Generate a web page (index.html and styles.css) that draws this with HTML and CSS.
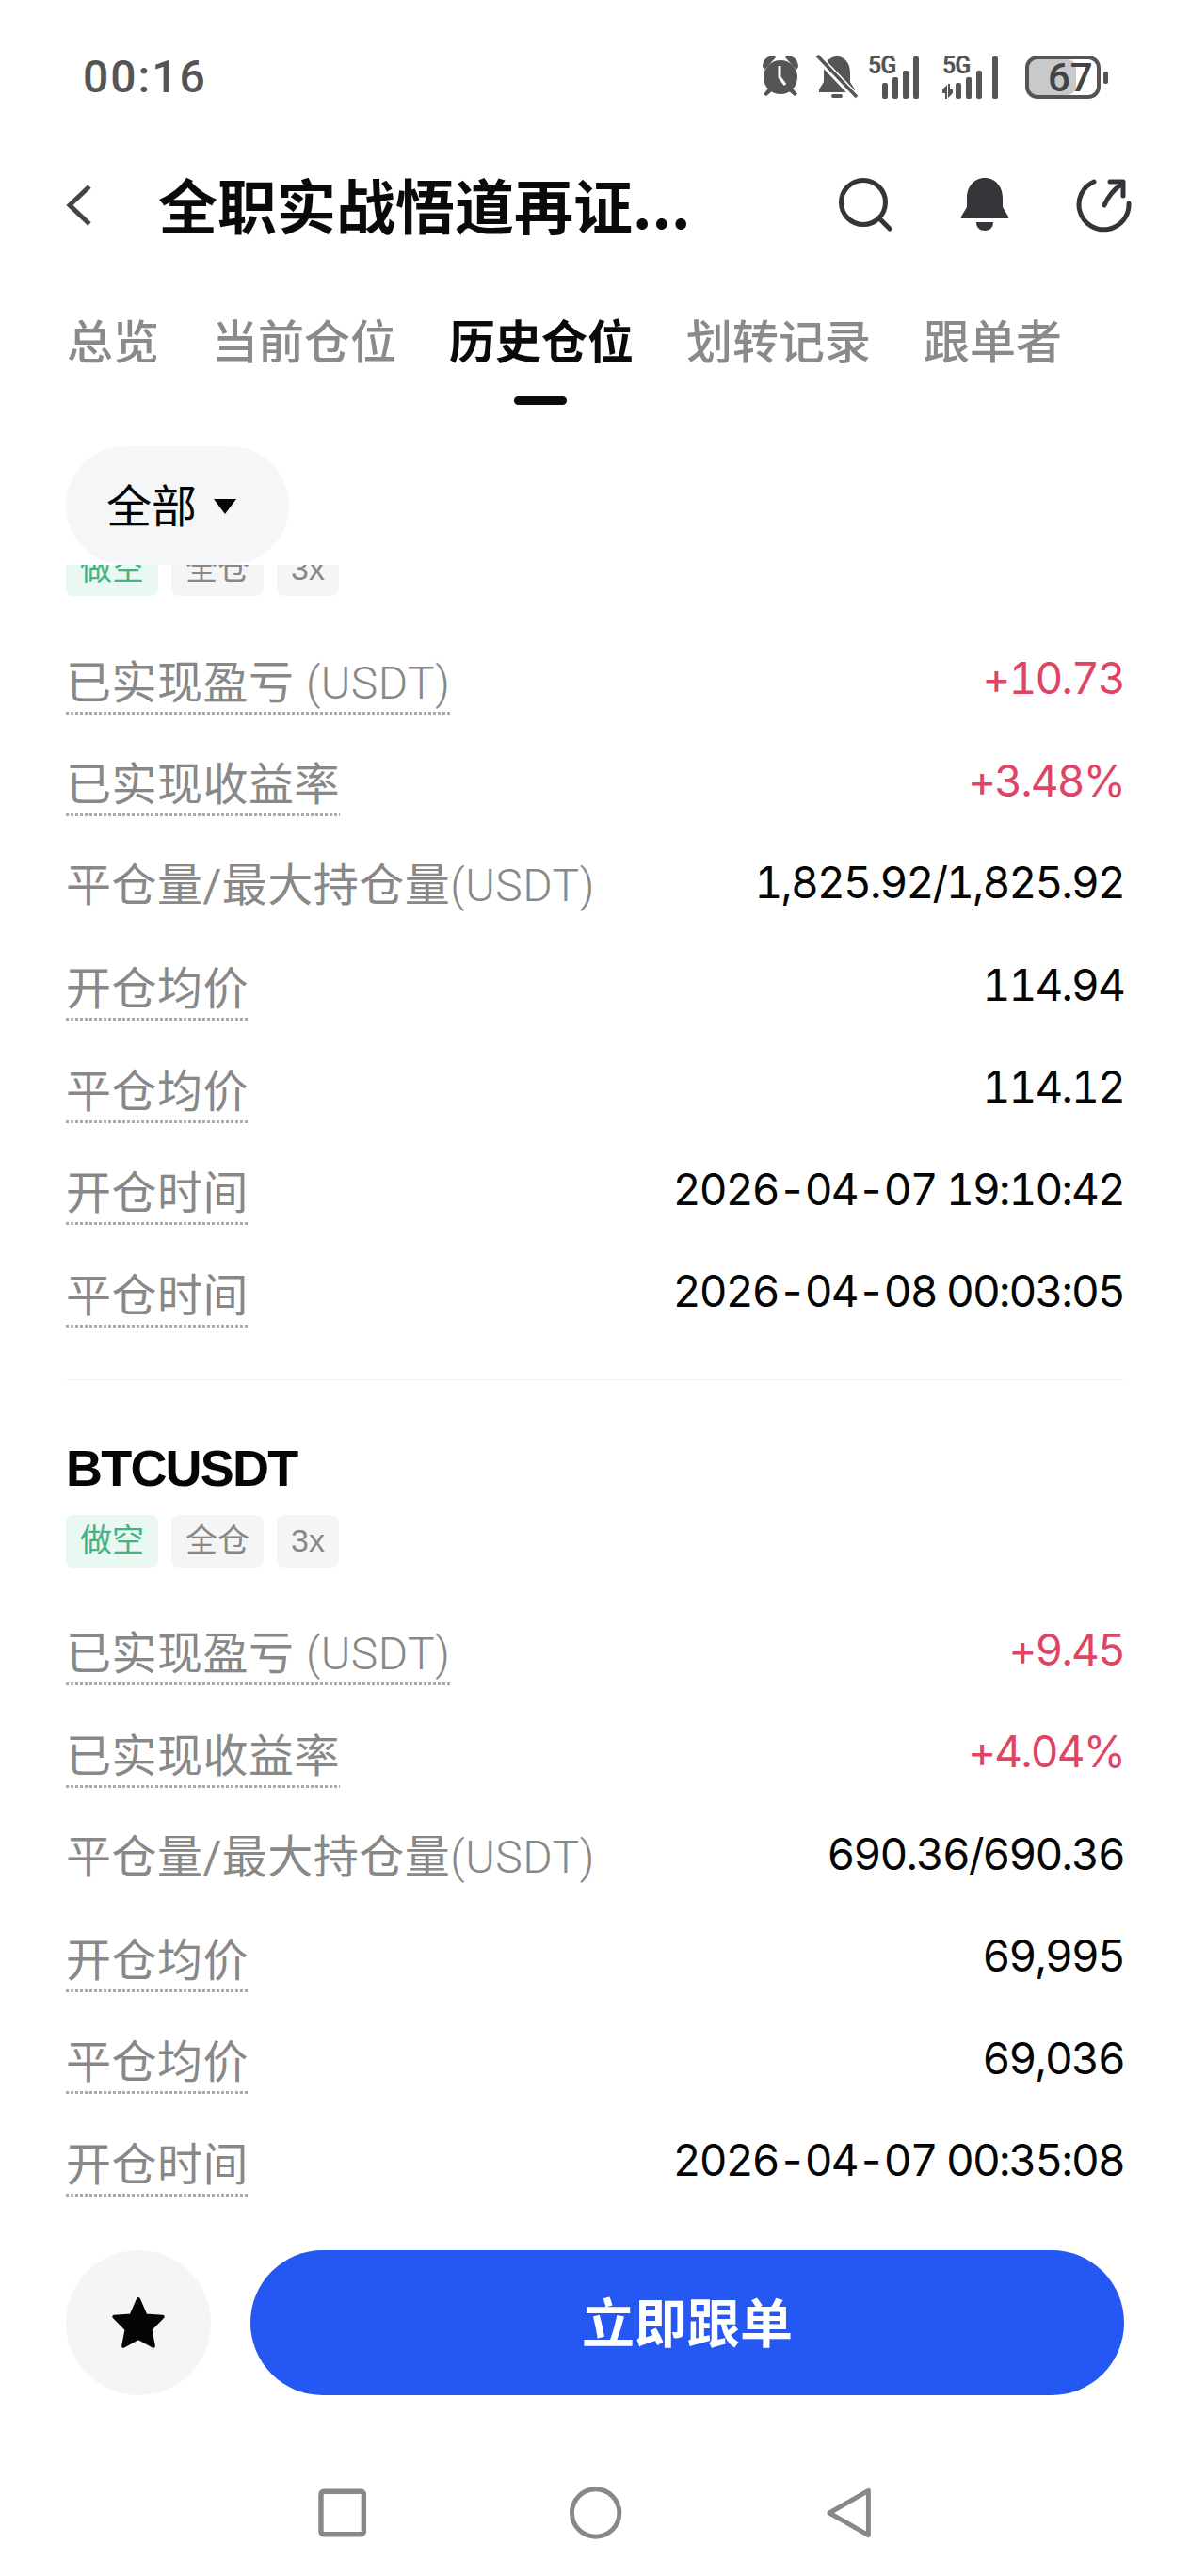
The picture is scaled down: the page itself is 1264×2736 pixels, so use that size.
FILE: index.html
```html
<!DOCTYPE html>
<html lang="zh-CN">
<head>
<meta charset="utf-8">
<title>历史仓位</title>
<link rel="stylesheet" href="styles.css">
</head>
<body>
<div class="page">
  <div class="status">
    <span class="time">00:16</span>
    <svg class="status-icons" width="384" height="50" viewBox="0 0 384 50">
      <g fill="#555">
        <circle cx="21" cy="26" r="18"/>
        <path d="M2 15C2 7 8 3 14 3L16 5 4 18Z M40 15C40 7 34 3 28 3L26 5 38 18Z"/>
        <path d="M8 38l-5 6 3 2 6-5Z M34 38l5 6-3 2-6-5Z"/>
      </g>
      <path d="M20 14v12l6 8" fill="none" stroke="#fff" stroke-width="3"/>
      <g fill="#555">
        <path d="M81 4c9 0 14 8 14 17v10l5 8v3H62v-3l5-8V21c0-9 5-17 14-17Z"/>
        <rect x="75" y="44" width="12" height="4" rx="2"/>
      </g>
      <path d="M60 4 102 48" stroke="#fff" stroke-width="8"/>
      <path d="M60 3 102 47" stroke="#555" stroke-width="3.5"/>
      <text x="114" y="22" class="net">5G</text>
      <g fill="#555">
        <rect x="129" y="32" width="6" height="17" rx="2"/>
        <rect x="140" y="26" width="6" height="23" rx="2"/>
        <rect x="151" y="19" width="6" height="30" rx="2"/>
        <rect x="162" y="4" width="6" height="45" rx="2"/>
      </g>
      <text x="193" y="22" class="net">5G</text>
      <g fill="#555">
        <path d="M193 39l5-5v15h-2v-6h-3Z M204 43l-5 5V33h2v6h3Z"/>
        <rect x="207" y="32" width="6" height="17" rx="2"/>
        <rect x="218" y="26" width="6" height="23" rx="2"/>
        <rect x="229" y="19" width="6" height="30" rx="2"/>
        <rect x="246" y="4" width="6" height="45" rx="2"/>
      </g>
      <rect x="285" y="7" width="50" height="38" rx="9" fill="#c9c9c9"/>
      <rect x="283" y="5" width="76" height="42" rx="11" fill="none" stroke="#555" stroke-width="4"/>
      <rect x="364" y="20" width="5" height="13" rx="2" fill="#555"/>
      <text x="305" y="41" class="batt">67</text>
    </svg>
  </div>

  <header class="nav">
    <svg class="back" width="28" height="46" viewBox="0 0 28 46"><path d="M25 3 4 23l21 20" fill="none" stroke="#444" stroke-width="5"/></svg>
    <h1 class="title">全职实战悟道再证...</h1>
    <div class="actions">
      <svg width="60" height="60" viewBox="0 0 60 60"><circle cx="28" cy="27" r="23.5" fill="none" stroke="#333538" stroke-width="5"/><path d="M45 44l11 11" stroke="#333538" stroke-width="5" stroke-linecap="round" fill="none"/></svg>
      <svg width="54" height="60" viewBox="0 0 54 60"><path d="M27 1C39 1 46 11 46 22V32L52 42Q53 44 51 44H3Q1 44 2 42L8 32V22C8 11 15 1 27 1Z" fill="#333538"/><path d="M18 48H36C36 54 32 57 27 57S18 54 18 48Z" fill="#333538"/></svg>
      <svg width="62" height="60" viewBox="0 0 62 60"><path d="M19 5A26.5 26.5 0 1 0 56 28" fill="none" stroke="#333538" stroke-width="5" stroke-linecap="round"/><path d="M30 30Q36 16 48 8" fill="none" stroke="#333538" stroke-width="5" stroke-linecap="round"/><path d="M36 5H50V20" fill="none" stroke="#333538" stroke-width="5" stroke-linecap="round" stroke-linejoin="round"/></svg>
    </div>
  </header>

  <nav class="tabs">
    <span class="tab">总览</span>
    <span class="tab">当前仓位</span>
    <span class="tab active">历史仓位</span>
    <span class="tab">划转记录</span>
    <span class="tab">跟单者</span>
  </nav>

  <div class="filter">
    <div class="pill"><span>全部</span><i class="caret"></i></div>
  </div>

  <main class="list">
    <section class="card first">
      <div class="tags">
        <span class="tag short">做空</span><span class="tag">全仓</span><span class="tag">3x</span>
      </div>
      <div class="row"><span class="label dotted">已实现盈亏 <span class="unit">(USDT)</span></span><span class="value up">+10.73</span></div>
      <div class="row"><span class="label dotted">已实现收益率</span><span class="value up">+3.48%</span></div>
      <div class="row"><span class="label">平仓量/最大持仓量<span class="unit">(USDT)</span></span><span class="value">1,825.92/1,825.92</span></div>
      <div class="row"><span class="label dotted">开仓均价</span><span class="value">114.94</span></div>
      <div class="row"><span class="label dotted">平仓均价</span><span class="value">114.12</span></div>
      <div class="row"><span class="label dotted">开仓时间</span><span class="value">2026-04-07 19:10:42</span></div>
      <div class="row"><span class="label dotted">平仓时间</span><span class="value">2026-04-08 00:03:05</span></div>
    </section>
    <hr class="divider">
    <section class="card">
      <h2 class="symbol">BTCUSDT</h2>
      <div class="tags">
        <span class="tag short">做空</span><span class="tag">全仓</span><span class="tag">3x</span>
      </div>
      <div class="row"><span class="label dotted">已实现盈亏 <span class="unit">(USDT)</span></span><span class="value up">+9.45</span></div>
      <div class="row"><span class="label dotted">已实现收益率</span><span class="value up">+4.04%</span></div>
      <div class="row"><span class="label">平仓量/最大持仓量<span class="unit">(USDT)</span></span><span class="value">690.36/690.36</span></div>
      <div class="row"><span class="label dotted">开仓均价</span><span class="value">69,995</span></div>
      <div class="row"><span class="label dotted">平仓均价</span><span class="value">69,036</span></div>
      <div class="row"><span class="label dotted">开仓时间</span><span class="value">2026-04-07 00:35:08</span></div>
    </section>
  </main>

  <div class="bar">
    <div class="fav">
      <svg width="60" height="58" viewBox="0 0 60 58"><path d="M30 4 37.6 21.5 55.7 22.7 42.4 36 45.9 53.8 30 45 14.1 53.8 17.6 36 4.3 22.7 22.4 21.5Z" fill="#050505" stroke="#050505" stroke-width="4" stroke-linejoin="round"/></svg>
    </div>
    <button class="cta">立即跟单</button>
  </div>

  <div class="sysnav">
    <svg width="52" height="52" viewBox="0 0 52 52"><rect x="3" y="3" width="46" height="46" rx="3" fill="none" stroke="#888" stroke-width="5.5"/></svg>
    <svg width="56" height="56" viewBox="0 0 56 56"><circle cx="28" cy="28" r="25.5" fill="none" stroke="#888" stroke-width="5"/></svg>
    <svg width="50" height="56" viewBox="0 0 50 56"><path d="M46 4v48L4 28Z" fill="none" stroke="#888" stroke-width="5" stroke-linejoin="round"/></svg>
  </div>
</div>
</body>
</html>
```

FILE: styles.css
```css
* { box-sizing: border-box; }
html, body { margin: 0; padding: 0; background: #fff; }
body { font-family: "Liberation Sans", "Noto Sans CJK SC", sans-serif; color: #050505; }
.page { width: 1264px; height: 2736px; display: flex; flex-direction: column; overflow: hidden; background: #fff; }

.status { height: 160px; flex: none; display: flex; align-items: center; justify-content: space-between; padding: 2px 72px 0 88px; }
.time { font-family: Roboto, sans-serif; font-size: 48px; font-weight: 500; letter-spacing: 2px; color: #555; }
.status-icons { flex: none; }
.net { font-family: "Roboto", sans-serif; font-size: 25px; font-weight: 700; fill: #555; letter-spacing: -1px; }
.batt { font-family: "Roboto", sans-serif; font-size: 42px; font-weight: 500; fill: #444; }

.nav { height: 116px; flex: none; display: flex; align-items: center; padding: 0 59px 0 70px; }
.back { flex: none; }
.title { margin: -6px 0 0 70px; font-family: "Noto Sans CJK SC", sans-serif; font-size: 63px; font-weight: 700; line-height: 1; color: #0a0a0a; white-space: nowrap; }
.actions { margin-left: auto; display: flex; align-items: center; gap: 70px; }

.tabs { height: 164px; flex: none; display: flex; gap: 56px; padding: 0 0 0 71px; }
.tab { position: relative; font-family: "Noto Sans CJK SC", sans-serif; font-size: 49px; font-weight: 500; line-height: 168px; color: #8a8a8a; white-space: nowrap; }
.tab.active { color: #0a0a0a; font-weight: 700; }
.tab.active::after { content: ""; position: absolute; left: 69px; bottom: 10px; width: 56px; height: 9px; border-radius: 5px; background: #0a0a0a; }

.filter { height: 160px; flex: none; padding: 34px 0 0 70px; background: #fff; position: relative; z-index: 1; }
.pill { width: 237px; height: 126px; border-radius: 63px; background: #f4f6f7; display: flex; align-items: center; gap: 18px; padding-left: 43px; }
.pill span { font-family: "Noto Sans CJK SC", sans-serif; font-size: 48px; color: #050505; margin-top: -6px; }
.caret { width: 0; height: 0; border-left: 12px solid transparent; border-right: 12px solid transparent; border-top: 16px solid #050505; margin-top: 2px; }

.list { flex: 1; min-height: 0; overflow: hidden; padding: 0 70px; }
.card.first { margin-top: -23px; }
.tags { display: flex; gap: 14px; margin-bottom: 37px; }
.tag { height: 56px; min-width: 66px; padding: 0 15px; border-radius: 8px; background: #f5f5f5; color: #888; font-size: 34px; line-height: 54px; font-family: "Liberation Sans", "Noto Sans CJK SC", sans-serif; text-align: center; }
.tag.short { background: #e9f8f1; color: #43b387; }

.row { height: 108.5px; display: flex; align-items: center; justify-content: space-between; }
.label { font-family: Roboto, "Noto Sans CJK SC", sans-serif; font-size: 48px; font-weight: 400; letter-spacing: .5px; line-height: 60px; color: #888; white-space: nowrap; }
.unit { font-weight: 300; }
.label.dotted { padding-bottom: 3px; margin-top: 6px; background: repeating-linear-gradient(90deg, #aaa 0 3px, transparent 3px 5px) left bottom / 100% 3px no-repeat; }
.value { font-family: Inter, "Liberation Sans", sans-serif; font-size: 46px; font-variant-numeric: tabular-nums; letter-spacing: -1.85px; color: #050505; white-space: nowrap; margin-top: -8px; }
.value.up { color: #df4464; }

.divider { border: 0; height: 1px; background: #f0f0f0; margin: 35px 0 63px; }
.symbol { margin: 0 0 20px; font-size: 54px; line-height: 60px; font-weight: 700; letter-spacing: -1.8px; color: #050505; }

.bar { height: 200px; flex: none; display: flex; gap: 42px; padding: 45px 70px 0; background: #fff; align-items: flex-start; }
.fav { width: 154px; height: 154px; border-radius: 50%; background: #f5f5f5; display: flex; align-items: center; justify-content: center; flex: none; }
.cta { flex: 1; height: 154px; border: 0; border-radius: 77px; background: #2557f2; color: #fff; font-family: "Noto Sans CJK SC", sans-serif; font-size: 56px; font-weight: 700; padding: 0 0 8px; }

.sysnav { height: 191px; flex: none; display: flex; padding: 96px 338px 39px; gap: 216px; align-items: center; }
```
